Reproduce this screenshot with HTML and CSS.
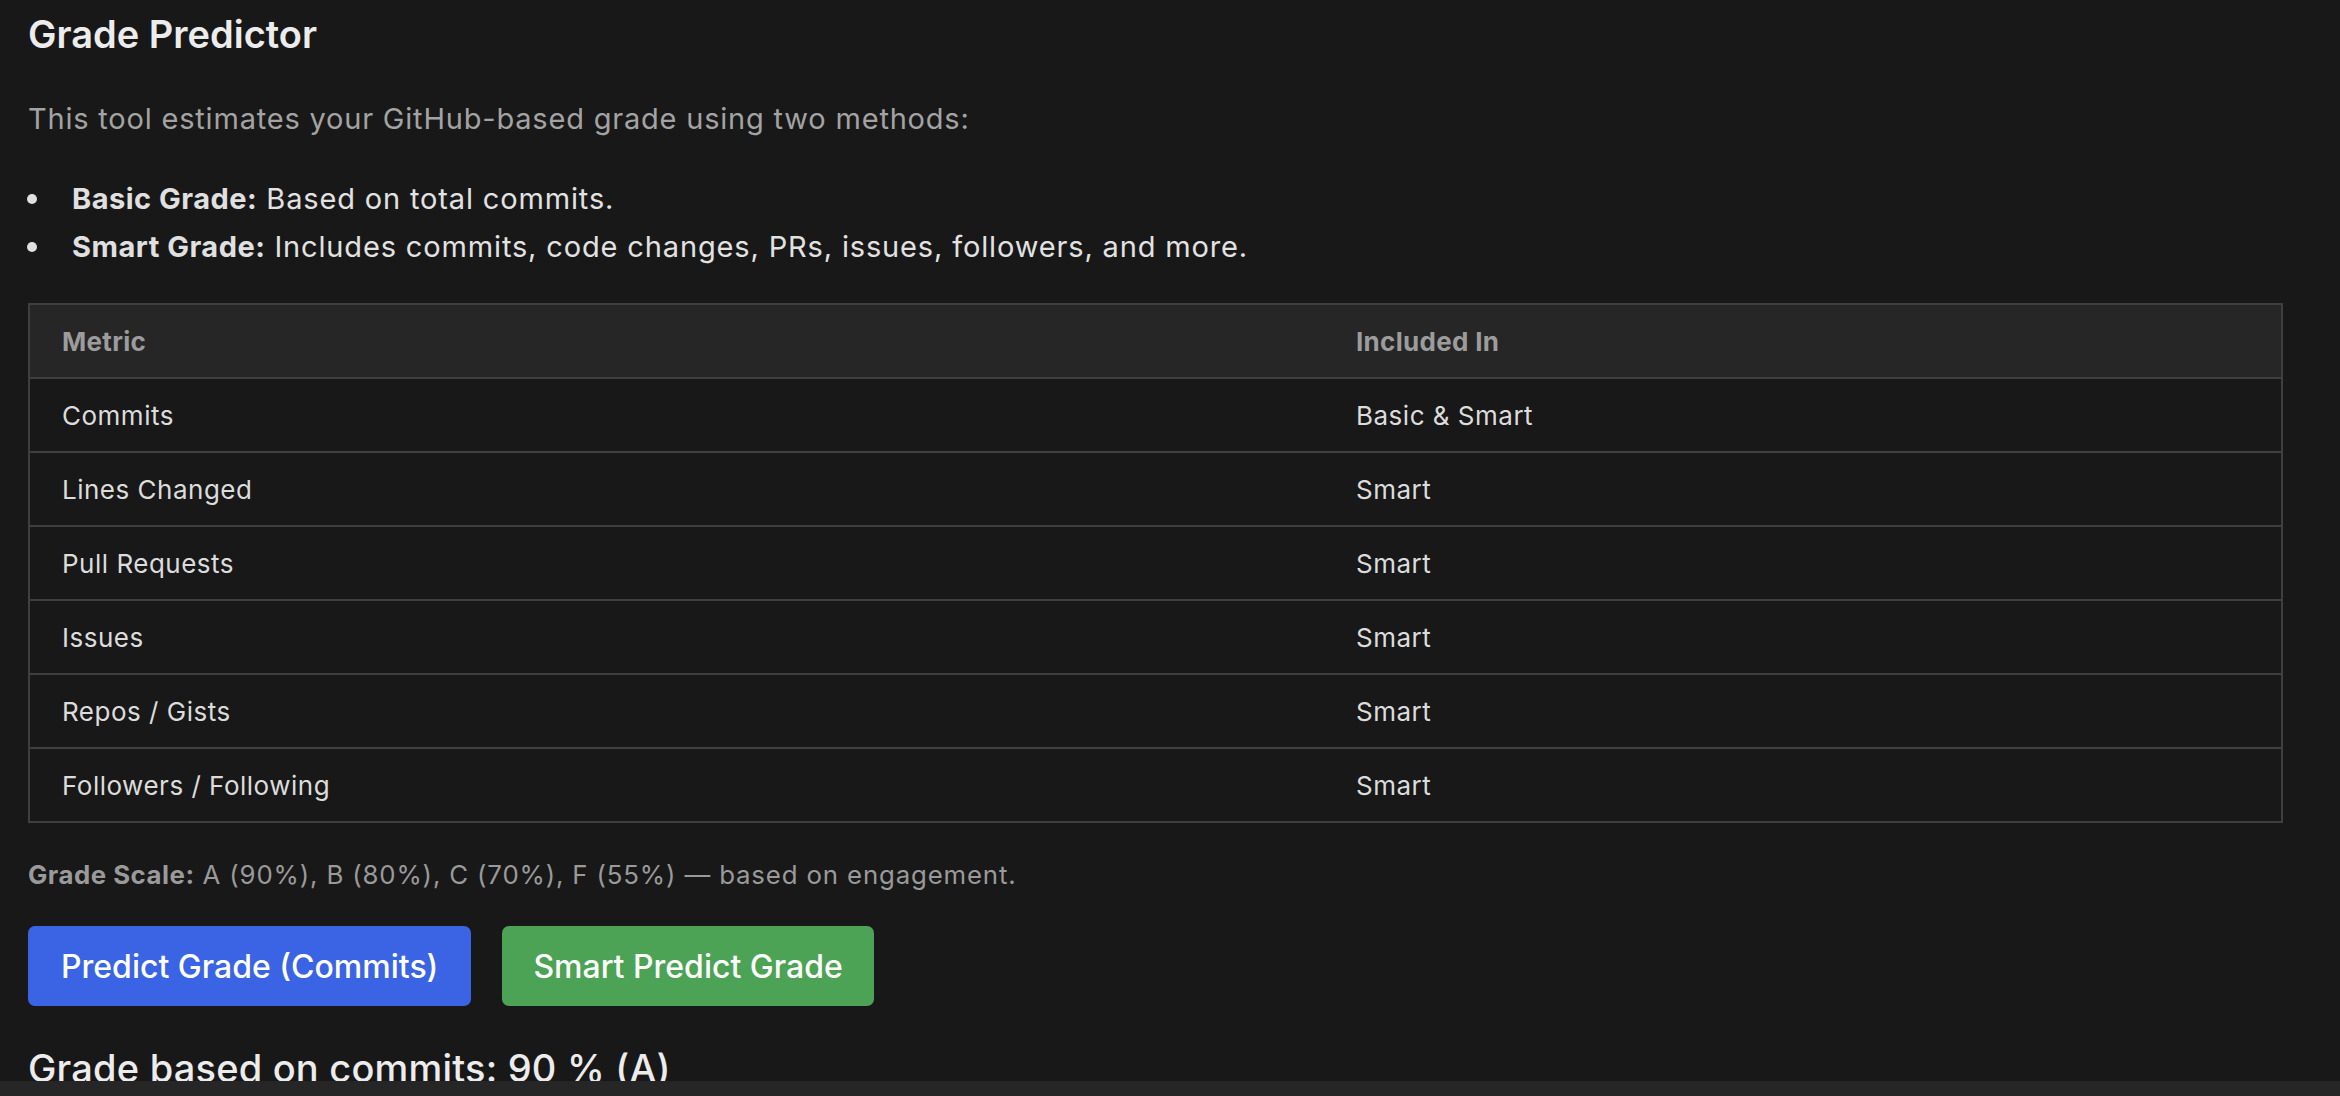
FILE: index.html
```html
<!DOCTYPE html>
<html lang="en">
<head>
<meta charset="utf-8">
<title>Grade Predictor</title>
<link rel="stylesheet" href="styles.css">
</head>
<body>
<main class="page">
  <h2 class="title">Grade Predictor</h2>
  <p class="intro">This tool estimates your GitHub-based grade using two methods:</p>
  <ul class="methods">
    <li><strong>Basic Grade:</strong> Based on total commits.</li>
    <li><strong>Smart Grade:</strong> Includes commits, code changes, PRs, issues, followers, and more.</li>
  </ul>
  <table class="metrics">
    <thead>
      <tr><th class="col-metric">Metric</th><th>Included In</th></tr>
    </thead>
    <tbody>
      <tr><td>Commits</td><td>Basic &amp; Smart</td></tr>
      <tr><td>Lines Changed</td><td>Smart</td></tr>
      <tr><td>Pull Requests</td><td>Smart</td></tr>
      <tr><td>Issues</td><td>Smart</td></tr>
      <tr><td>Repos / Gists</td><td>Smart</td></tr>
      <tr><td>Followers / Following</td><td>Smart</td></tr>
    </tbody>
  </table>
  <p class="scale"><strong>Grade Scale:</strong> A (90%), B (80%), C (70%), F (55%) — based on engagement.</p>
  <div class="actions">
    <button class="btn btn-blue" type="button">Predict Grade (Commits)</button>
    <button class="btn btn-green" type="button">Smart Predict Grade</button>
  </div>
  <h3 class="result">Grade based on commits: 90 % (A)</h3>
</main>
<div class="bottom-bar"></div>
</body>
</html>
```
FILE: styles.css
```css
html, body {
  margin: 0;
  padding: 0;
  background: #181818;
  height: 100%;
  overflow: hidden;
}
body {
  font-family: Inter, "Noto Sans", "Liberation Sans", sans-serif;
  color: #e6e6e6;
}
.page {
  padding: 0 0 0 28px;
  width: 2255px;
}
.title {
  margin: 0;
  padding-top: 11px;
  font-size: 38px;
  line-height: 46px;
  font-weight: 600;
  color: #ececec;
}
.intro {
  margin: 42px 0 0;
  font-size: 29px;
  letter-spacing: 0.8px;
  line-height: 40px;
  color: #a3a3a3;
}
.methods {
  margin: 36px 0 0;
  padding: 0 0 0 44px;
  list-style: none;
  font-size: 29px;
  letter-spacing: 0.85px;
  line-height: 48px;
  color: #e2e2e2;
}
.methods li {
  position: relative;
}
.methods li::before {
  content: "";
  position: absolute;
  left: -45px;
  top: 19px;
  width: 10px;
  height: 10px;
  border-radius: 50%;
  background: #e0e0e0;
}
.methods strong {
  font-weight: 700;
  letter-spacing: 0.5px;
  color: #e0e0e0;
}
.metrics {
  margin-top: 32px;
  width: 100%;
  border-collapse: collapse;
  border: 2px solid #3f3f3f;
  font-size: 26px;
  letter-spacing: 0.5px;
}
.metrics th, .metrics td {
  border-top: 2px solid #3f3f3f;
  padding: 0 32px;
  height: 72px;
  text-align: left;
}
.metrics th {
  background: #262626;
  color: #9c9c9c;
  font-weight: 700;
  letter-spacing: 0.3px;
}
.metrics td {
  color: #dcdcdc;
}
.col-metric {
  width: 1230px;
}
.scale {
  margin: 34px 0 0;
  font-size: 25.8px;
  letter-spacing: 0.85px;
  line-height: 36px;
  color: #9a9a9a;
}
.scale strong {
  font-weight: 700;
  letter-spacing: 0.5px;
}
.actions {
  display: flex;
  gap: 31px;
  margin-top: 33px;
}
.btn {
  height: 80px;
  border: none;
  border-radius: 7px;
  padding: 0 33px;
  font-family: inherit;
  font-size: 32px;
  font-weight: 500;
  color: #ffffff;
}
.btn-blue {
  background: #3a64e3;
}
.btn-green {
  background: #4ca255;
  padding: 0 31px;
}
.result {
  margin: 39px 0 0;
  font-size: 38px;
  letter-spacing: 0.2px;
  line-height: 46px;
  font-weight: 500;
  color: #ececec;
}
.bottom-bar {
  position: fixed;
  left: 0;
  right: 0;
  bottom: 0;
  height: 15px;
  background: #262626;
}
```
